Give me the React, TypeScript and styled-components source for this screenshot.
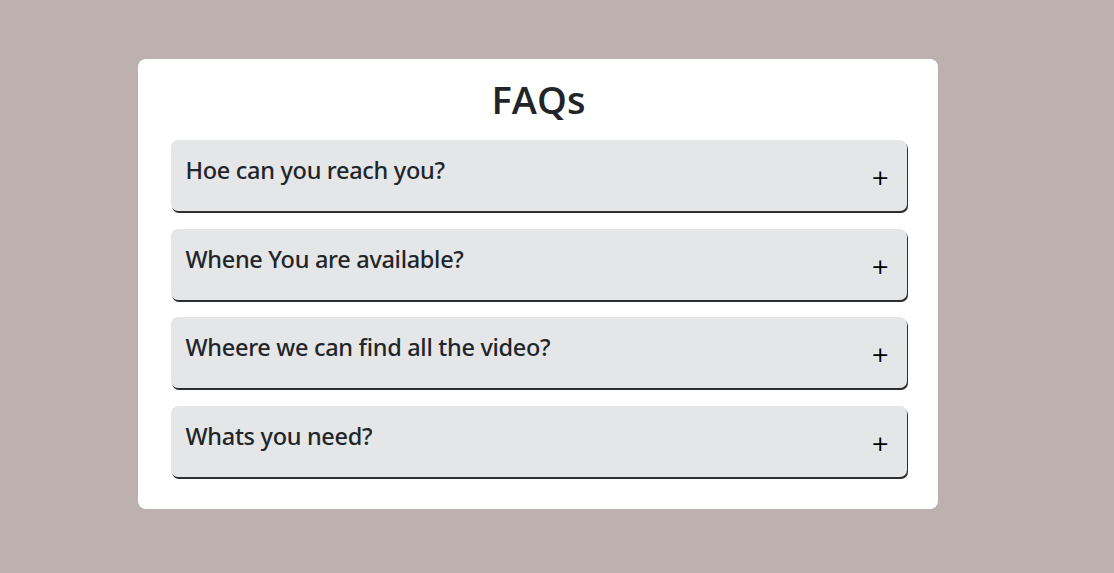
import React from "react";
import styled, { createGlobalStyle } from "styled-components";

const Global = createGlobalStyle`
  html, body { margin: 0; padding: 0; }
  body {
    background: #bdb1b0;
    font-family: "Open Sans", "Noto Sans", sans-serif;
    color: #212529;
  }
`;

const Page = styled.div`
  min-height: 573px;
  padding: 59px 39px 0 0;
  box-sizing: border-box;
  display: flex;
  justify-content: center;
  align-items: flex-start;
`;

const Card = styled.div`
  width: 800px;
  height: 450px;
  box-sizing: border-box;
  background: #ffffff;
  border-radius: 8px;
  padding: 14px 31px 0 33px;
  display: flex;
  flex-direction: column;
`;

const Title = styled.h1`
  margin: 0 0 15px;
  text-align: center;
  font-size: 38px;
  font-weight: 600;
  line-height: 52px;
`;

const List = styled.div`
  display: flex;
  flex-direction: column;
  gap: 17.5px;
`;

const Item = styled.div`
  height: 71px;
  box-sizing: border-box;
  background: #e5e6e8;
  border-radius: 7px;
  box-shadow: 1px 2px 0 #2f2f2f;
  display: flex;
  justify-content: space-between;
  align-items: flex-start;
  padding: 15px 17px 0 15px;
`;

const Question = styled.h4`
  margin: 0;
  font-family: "Noto Sans", "Open Sans", sans-serif;
  font-size: 23.5px;
  font-weight: 500;
  line-height: 30px;
  letter-spacing: -0.3px;
`;

const Toggle = styled.span`
  margin-top: 11px;
  font-size: 22px;
  line-height: 24px;
  color: #000;
  font-family: "DejaVu Sans", sans-serif;
  font-weight: 400;
`;

const questions = [
  "Hoe can you reach you?",
  "Whene You are available?",
  "Wheere we can find all the video?",
  "Whats you need?",
];

export default function App() {
  return (
    <>
      <Global />
      <Page>
        <Card>
          <Title>FAQs</Title>
          <List>
            {questions.map((q) => (
              <Item key={q}>
                <Question>{q}</Question>
                <Toggle>+</Toggle>
              </Item>
            ))}
          </List>
        </Card>
      </Page>
    </>
  );
}
